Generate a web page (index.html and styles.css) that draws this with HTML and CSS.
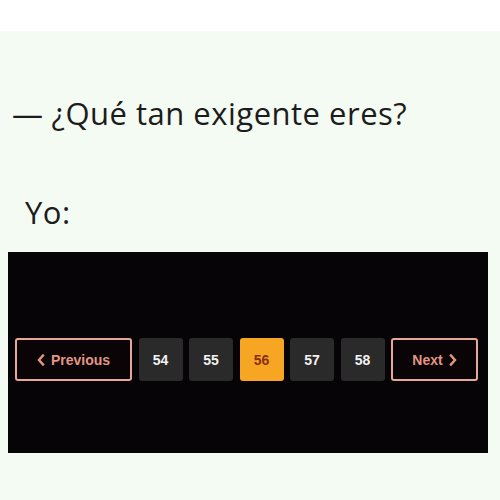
FILE: index.html
```html
<!DOCTYPE html>
<html lang="es">
<head>
<meta charset="utf-8">
<link rel="stylesheet" href="styles.css">
</head>
<body>
<div class="topbar"></div>
<main class="meme">
  <p class="question"><span class="dash">—</span> ¿Qué tan exigente eres?</p>
  <p class="answer">Yo:</p>
  <section class="panel">
    <nav class="pager">
      <a class="pg-btn pg-prev">
        <svg class="chev" viewBox="0 0 8 12" width="8" height="12"><polyline points="6,1.5 2,6 6,10.5" /></svg>
        Previous
      </a>
      <a class="pg-num">54</a>
      <a class="pg-num">55</a>
      <a class="pg-num active">56</a>
      <a class="pg-num">57</a>
      <a class="pg-num">58</a>
      <a class="pg-btn pg-next">
        Next
        <svg class="chev" viewBox="0 0 8 12" width="8" height="12"><polyline points="2,1.5 6,6 2,10.5" /></svg>
      </a>
    </nav>
  </section>
</main>
</body>
</html>
```
FILE: styles.css
```css
html, body {
  margin: 0;
  padding: 0;
  background: #f4fbf2;
}
.topbar {
  height: 31px;
  background: #ffffff;
}
.meme {
  display: flex;
  flex-direction: column;
  font-family: "Open Sans", "Noto Sans", sans-serif;
  color: #1c1c1c;
}
.question {
  margin: 0;
  padding: 62px 0 0 12px;
  font-size: 31px;
  line-height: 40px;
  letter-spacing: 0.5px;
  white-space: nowrap;
}
.dash {
  letter-spacing: 0;
}
.answer {
  margin: 0;
  padding: 59px 0 0 25px;
  font-size: 31px;
  line-height: 40px;
  letter-spacing: 0.5px;
}
.panel {
  margin: 20px 0 0 8px;
  width: 480px;
  height: 201px;
  background: #060406;
  display: flex;
  flex-direction: column;
}
.pager {
  display: flex;
  align-items: center;
  gap: 6.5px;
  margin-top: 86px;
  padding-left: 7px;
  font-family: "Liberation Sans", Arial, sans-serif;
  font-weight: bold;
  font-size: 14px;
}
.pg-btn {
  box-sizing: border-box;
  height: 43px;
  border: 2px solid #e8a899;
  border-radius: 3px;
  color: #e39684;
  display: flex;
  align-items: center;
  justify-content: center;
  gap: 6px;
  background: #0a0406;
}
.pg-prev {
  width: 117px;
}
.pg-next {
  width: 87px;
}
.chev {
  fill: none;
  stroke: #e39684;
  stroke-width: 2.4;
  stroke-linecap: square;
}
.pg-num {
  box-sizing: border-box;
  width: 44px;
  height: 43px;
  border-radius: 3px;
  background: #2a2a2a;
  color: #f2f2f2;
  display: flex;
  align-items: center;
  justify-content: center;
}
.pg-num.active {
  background: #f6a623;
  color: #8c2e16;
}
```
